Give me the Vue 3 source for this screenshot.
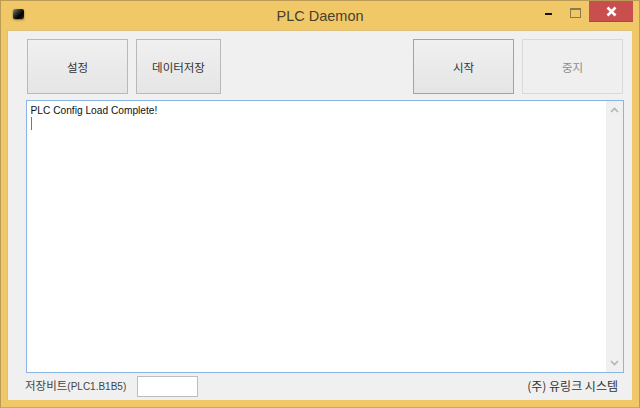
<script setup>
const title = 'PLC Daemon'
</script>

<template>
  <div class="window">
    <header class="titlebar">
      <span class="appicon"></span>
      <span class="title">{{ title }}</span>
      <div class="controls">
        <span class="min"></span>
        <span class="max"></span>
        <span class="close">
          <svg width="13" height="11" viewBox="0 0 13 11">
            <path d="M2.5 1.5 L10.5 9.5 M10.5 1.5 L2.5 9.5" stroke="#fff" stroke-width="2.6" fill="none" />
          </svg>
        </span>
      </div>
    </header>
    <main class="client">
      <div class="toolbar">
        <button class="btn wide">설정</button>
        <button class="btn save">데이터저장</button>
        <div class="spacer"></div>
        <button class="btn wide focus">시작</button>
        <button class="btn wide off" disabled>중지</button>
      </div>
      <div class="log">
        <div class="logtext">
          <div>PLC Config Load Complete!</div>
          <span class="caret"></span>
        </div>
        <div class="scroll">
          <svg width="9" height="6" viewBox="0 0 9 6"><path d="M1 5 L4.5 1.5 L8 5" stroke="#b4b4b4" stroke-width="1.6" fill="none" /></svg>
          <svg width="9" height="6" viewBox="0 0 9 6"><path d="M1 1 L4.5 4.5 L8 1" stroke="#b4b4b4" stroke-width="1.6" fill="none" /></svg>
        </div>
      </div>
      <footer class="status">
        <span class="bit">저장비트<small>(PLC1.B1B5)</small></span>
        <span class="field"></span>
        <span class="spacer"></span>
        <span class="brand">(주) 유링크 시스템</span>
      </footer>
    </main>
  </div>
</template>

<style>
html, body { margin: 0; background: #f0c868; }
</style>

<style scoped>
.window {
  width: 640px;
  height: 408px;
  box-sizing: border-box;
  border: 1px solid #bb9c56;
  border-bottom-color: #c9a95c;
  background: #f0c868;
  padding: 0 7px 7px 6px;
  display: flex;
  flex-direction: column;
  font-family: "Noto Sans CJK KR", "Liberation Sans", sans-serif;
  overflow: hidden;
}
.titlebar {
  height: 29px;
  flex: none;
  position: relative;
  display: flex;
  align-items: flex-start;
}
.appicon {
  width: 11px;
  height: 10px;
  margin: 8px 0 0 6px;
  border-radius: 2px;
  background: linear-gradient(135deg, #8a8a8a 0%, #333 35%, #000 65%, #2a2a2a 100%);
  box-shadow: 0 1px 2px rgba(90, 70, 20, .7);
  filter: blur(.5px);
}
.title {
  position: absolute;
  left: 1px;
  right: 0;
  top: 5px;
  text-align: center;
  font-family: "Liberation Sans", sans-serif;
  font-size: 14.5px;
  line-height: 20px;
  color: #4a412c;
}
.controls {
  margin-left: auto;
  margin-right: -1px;
  display: flex;
  align-items: flex-start;
}
.min {
  width: 7px;
  height: 2px;
  background: #151515;
  margin: 12px 0 0 0;
}
.max {
  width: 9px;
  height: 7px;
  border: 1px solid #8c7a4c;
  border-top-width: 2px;
  margin: 7px 0 0 18px;
}
.close {
  width: 44px;
  height: 20px;
  margin: 0 0 0 8px;
  background: #c84f4d;
  border-bottom: 1px solid #b84040;
  display: flex;
  align-items: center;
  justify-content: center;
}
.client {
  flex: 1;
  background: #f0f0f0;
  border: 1px solid #dcc07c;
  border-bottom: 0;
  border-right: 0;
  padding: 8px 8px 0 18px;
  display: flex;
  flex-direction: column;
  min-height: 0;
}
.toolbar {
  display: flex;
  gap: 8px;
  height: 55px;
  flex: none;
  padding: 0 1px;
}
.spacer { flex: 1; }
.btn {
  box-sizing: border-box;
  height: 55px;
  padding: 0;
  border: 1px solid #b9b9b9;
  background: linear-gradient(#f0f0f0, #e5e5e5);
  font-family: "Noto Sans CJK KR", sans-serif;
  font-size: 11.5px;
  font-weight: 400;
  color: #333;
}
.wide { width: 101px; }
.save { width: 85px; }
.focus { border-color: #a3a3a3; }
.off {
  background: #efefef;
  border-color: #d9d9d9;
  color: #8d8d8d;
}
.log {
  margin-top: 6px;
  height: 273px;
  flex: none;
  box-sizing: border-box;
  border: 1px solid #8ab4e4;
  background: #fff;
  display: flex;
}
.logtext {
  flex: 1;
  padding: 4px 3.5px 3px;
  font-family: "Liberation Sans", sans-serif;
  font-size: 10.2px;
  line-height: 12px;
  color: #111;
}
.caret {
  display: block;
  width: 1px;
  height: 13px;
  background: #777;
}
.scroll {
  width: 17px;
  background: #f0f0f0;
  display: flex;
  flex-direction: column;
  align-items: center;
  justify-content: space-between;
  padding: 6px 0;
  box-sizing: border-box;
}
.status {
  flex: 1;
  display: flex;
  align-items: center;
  margin-left: -1px;
  color: #333;
  padding-bottom: 1px;
}
.bit {
  font-size: 11.5px;
  line-height: 14px;
  font-weight: 400;
  color: #444;
  width: 112px;
  white-space: nowrap;
}
.bit small {
  font-family: "Liberation Sans", sans-serif;
  font-size: 10px;
}
.field {
  width: 61px;
  height: 21px;
  box-sizing: border-box;
  background: #fff;
  border: 1px solid #bdbdbd;
}
.brand {
  font-size: 12px;
  color: #333;
  margin-right: 6px;
  padding-bottom: 1px;
  white-space: nowrap;
}
</style>
